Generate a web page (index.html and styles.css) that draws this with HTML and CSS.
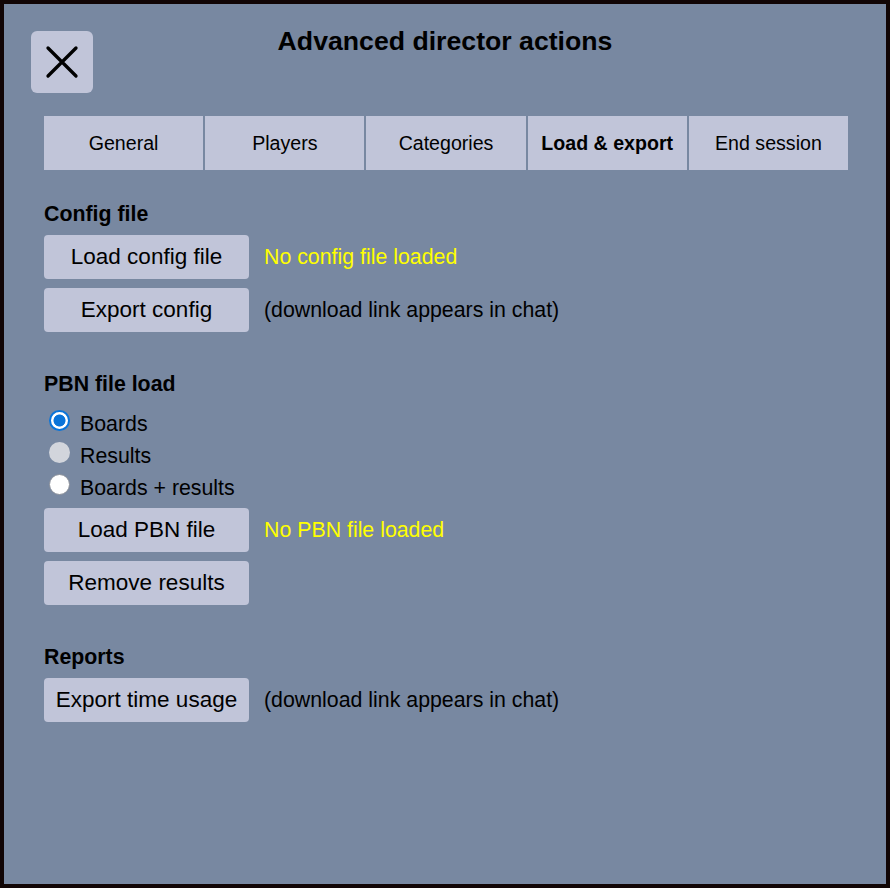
FILE: index.html
```html
<!DOCTYPE html>
<html lang="en">
<head>
<meta charset="utf-8">
<title>Advanced director actions</title>
<link rel="stylesheet" href="styles.css">
</head>
<body>
<div class="dialog">
  <header class="header">
    <button class="close" aria-label="Close">
      <svg width="62" height="62" viewBox="0 0 62 62"><path d="M17 17 L45 45 M45 17 L17 45" stroke="#000" stroke-width="3.3" stroke-linecap="round" fill="none"/></svg>
    </button>
    <h1 class="title">Advanced director actions</h1>
    <div class="spacer"></div>
  </header>

  <nav class="tabs">
    <div class="tab">General</div>
    <div class="tab">Players</div>
    <div class="tab">Categories</div>
    <div class="tab active">Load &amp; export</div>
    <div class="tab">End session</div>
  </nav>

  <section class="section first">
    <h2 class="heading">Config file</h2>
    <div class="row"><button class="btn">Load config file</button><span class="status">No config file loaded</span></div>
    <div class="row"><button class="btn">Export config</button><span class="note">(download link appears in chat)</span></div>
  </section>

  <section class="section">
    <h2 class="heading">PBN file load</h2>
    <div class="radios">
      <label class="radio-row"><span class="radio checked"></span><span class="radio-text">Boards</span></label>
      <label class="radio-row"><span class="radio disabled"></span><span class="radio-text">Results</span></label>
      <label class="radio-row"><span class="radio"></span><span class="radio-text">Boards + results</span></label>
    </div>
    <div class="row"><button class="btn">Load PBN file</button><span class="status">No PBN file loaded</span></div>
    <div class="row"><button class="btn">Remove results</button></div>
  </section>

  <section class="section">
    <h2 class="heading">Reports</h2>
    <div class="row"><button class="btn">Export time usage</button><span class="note">(download link appears in chat)</span></div>
  </section>
</div>
</body>
</html>
```

FILE: styles.css
```css
html, body {
  margin: 0;
  padding: 0;
}
body {
  font-family: "Liberation Sans", Arial, sans-serif;
  color: #000;
  background: #110505;
}
.dialog {
  box-sizing: border-box;
  width: 890px;
  height: 888px;
  border: 4px solid #110505;
  background: #7888a1;
  padding: 0 0 0 40px;
}
.header {
  display: flex;
  align-items: flex-start;
  padding: 22px 0 0 0;
  margin-left: -13px;
  width: 828px;
}
.close {
  width: 62px;
  height: 62px;
  margin-top: 5px;
  padding: 0;
  border: none;
  border-radius: 6px;
  background: #c1c5d9;
  display: flex;
  align-items: center;
  justify-content: center;
}
.close svg { display: block; }
.spacer { width: 62px; flex: none; }
.title {
  flex: 1;
  margin: 0;
  text-align: center;
  font-size: 26.67px;
  line-height: 31px;
  font-weight: bold;
}
.tabs {
  display: flex;
  gap: 2px;
  width: 804px;
  margin-top: 23px;
}
.tab {
  flex: 1;
  height: 54px;
  display: flex;
  align-items: center;
  justify-content: center;
  background: #c1c5d9;
  font-size: 19.6px;
}
.tab.active { font-weight: bold; }
.section { margin-top: 40px; }
.section.first { margin-top: 32px; }
.heading {
  margin: 0 0 9px 0;
  font-size: 21.33px;
  line-height: 24px;
  font-weight: bold;
}
.row {
  display: flex;
  align-items: center;
  gap: 15px;
  margin-bottom: 9px;
  font-size: 21.33px;
}
.btn {
  width: 205px;
  height: 44px;
  padding: 0;
  border: none;
  border-radius: 4px;
  background: #c1c5d9;
  font-family: "Liberation Sans", Arial, sans-serif;
  font-size: 22.5px;
  color: #000;
}
.status { color: #ffff00; }
.note { color: #000; }
.radios { margin-bottom: 7px; }
.radio-row {
  display: flex;
  align-items: center;
  height: 32px;
  font-size: 21.33px;
}
.radio {
  box-sizing: border-box;
  width: 21px;
  height: 21px;
  border-radius: 50%;
  margin: 0 10px 2px 5px;
  background: #fff;
  border: 1px solid #8a8f99;
  flex: none;
}
.radio.checked {
  border: 2px solid #0a74d9;
  background: radial-gradient(circle, #0a74d9 0 5.6px, #fff 6.4px);
}
.radio.disabled {
  border: none;
  background: #d2d5dc;
}
.radio-text { padding-top: 6px; }
```
